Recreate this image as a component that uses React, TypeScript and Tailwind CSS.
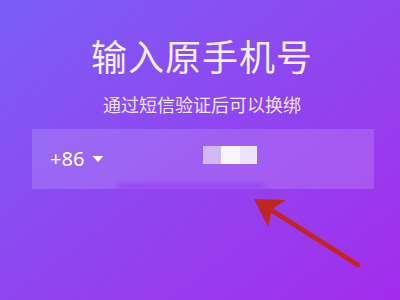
import React from "react";

export default function App() {
  return (
    <div
      className="relative w-[400px] h-[300px] overflow-hidden bg-gradient-to-br from-[#7a5ef5] via-[#8f45f0] to-[#a32bec]"
      style={{ fontFamily: '"Noto Sans CJK SC", "Noto Sans", sans-serif' }}
    >
      <div className="flex flex-col items-center pt-[36px]">
        <div className="text-[36px] leading-[38px] text-[#f4eefe] tracking-[1px] pl-[4px]">输入原手机号</div>
        <div className="mt-[19px] text-[18px] leading-[22px] text-[#ece4fd] pl-[4px]">通过短信验证后可以换绑</div>
      </div>
      <div className="relative mx-[32px] mt-[14px] h-[60px] w-[342px] bg-white/15 flex items-center">
        <span className="ml-[18px] text-[20px] text-white" style={{ fontFamily: '"Noto Sans", sans-serif' }}>+86</span>
        <svg className="ml-[8px]" width="12" height="8" viewBox="0 0 12 8">
          <path d="M0.5 1 L11.5 1 L6 7 Z" fill="#ffffff" />
        </svg>
        <div className="absolute left-[171px] top-[17px] flex h-[18px]">
          <div className="w-[18px] h-full bg-[#d1b9f7]" />
          <div className="w-[19px] h-full bg-[#f8f4fe]" />
          <div className="w-[17px] h-full bg-[#ede3fc]" />
        </div>
        <div className="absolute left-[86px] bottom-0 w-[146px] h-[6px] bg-[#9748f0] blur-[2px]" />
      </div>
      <svg className="absolute left-0 top-0" width="400" height="300" viewBox="0 0 400 300">
        <line x1="358" y1="265" x2="268" y2="208" stroke="#c2241f" strokeWidth="5" strokeLinecap="round" />
        <path d="M254 199 L286 200 L272 209 L268 227 Z" fill="#c2241f" />
      </svg>
    </div>
  );
}
